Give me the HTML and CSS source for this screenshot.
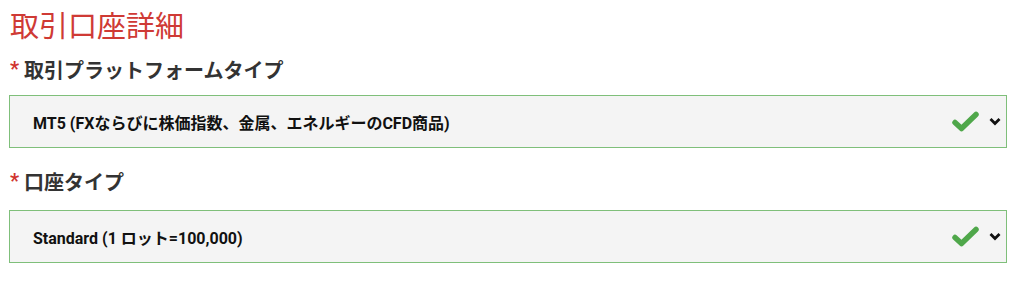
FILE: index.html
```html
<!DOCTYPE html>
<html lang="ja">
<head>
<meta charset="utf-8">
<link rel="stylesheet" href="styles.css">
</head>
<body>
<div class="form">
  <h2 class="title">取引口座詳細</h2>
  <div class="field">
    <label class="label"><span class="req">*</span>取引プラットフォームタイプ</label>
    <div class="select">
      <span class="value">MT5 (FXならびに株価指数、金属、エネルギーのCFD商品)</span>
      <span class="icons">
        <svg class="check" width="27" height="21" viewBox="0 0 27 21"><path d="M3 11.5 L9.5 17.5 L24 3.5" fill="none" stroke="#4fa74a" stroke-width="5.5" stroke-linecap="round" stroke-linejoin="round"/></svg>
        <svg class="chev" width="12" height="9" viewBox="0 0 12 9"><path d="M1.5 2 L6 6.5 L10.5 2" fill="none" stroke="#111" stroke-width="2.8"/></svg>
      </span>
    </div>
  </div>
  <div class="field">
    <label class="label"><span class="req">*</span>口座タイプ</label>
    <div class="select">
      <span class="value">Standard (1 ロット=100,000)</span>
      <span class="icons">
        <svg class="check" width="27" height="21" viewBox="0 0 27 21"><path d="M3 11.5 L9.5 17.5 L24 3.5" fill="none" stroke="#4fa74a" stroke-width="5.5" stroke-linecap="round" stroke-linejoin="round"/></svg>
        <svg class="chev" width="12" height="9" viewBox="0 0 12 9"><path d="M1.5 2 L6 6.5 L10.5 2" fill="none" stroke="#111" stroke-width="2.8"/></svg>
      </span>
    </div>
  </div>
</div>
</body>
</html>
```
FILE: styles.css
```css
html, body {
  margin: 0;
  padding: 0;
  background: #fff;
}
body {
  font-family: Roboto, "Liberation Sans", "Noto Sans CJK JP", sans-serif;
  color: #333;
}
.form {
  width: 998px;
  margin-left: 9px;
}
.title {
  margin: 0;
  padding-top: 4px;
  font-family: "Noto Sans CJK JP", sans-serif;
  font-size: 29px;
  font-weight: 400;
  line-height: 40px;
  color: #cf3a35;
  padding-left: 1px;
}
.field {
  display: flex;
  flex-direction: column;
}
.label {
  display: flex;
  align-items: center;
  margin-top: 10px;
  height: 30px;
  font-family: "Noto Sans CJK JP", sans-serif;
  font-size: 20px;
  font-weight: 700;
  color: #333;
  padding-left: 1px;
}
.field + .field .label {
  margin-top: 18px;
}
.req {
  color: #d0342f;
  font-family: Roboto, sans-serif;
  font-weight: 700;
  font-size: 20px;
  margin-right: 5px;
}
.select {
  margin-top: 11px;
  height: 53px;
  box-sizing: border-box;
  border: 1.5px solid #7fbf7a;
  background: #f4f4f4;
  display: flex;
  align-items: center;
  justify-content: space-between;
  padding-left: 23px;
  padding-right: 5px;
}
.field + .field .select {
  margin-top: 14px;
}
.value {
  font-family: Roboto, "Noto Sans CJK JP", sans-serif;
  font-size: 16px;
  font-weight: 700;
  color: #111;
}
.icons {
  display: flex;
  align-items: center;
  gap: 10px;
}
.check { display: block; }
.chev { display: block; }
```
